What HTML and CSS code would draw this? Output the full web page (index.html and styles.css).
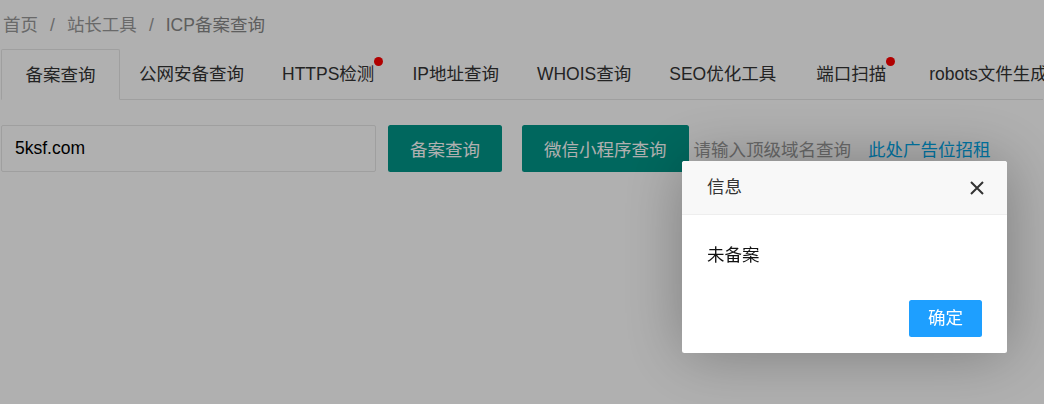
FILE: index.html
```html
<!DOCTYPE html>
<html lang="zh-CN">
  <head>
    <meta charset="UTF-8" />
    <meta name="viewport" content="width=device-width, initial-scale=1.0" />
    <title>ICP备案查询</title>
    <link rel="stylesheet" href="styles.css">
  </head>
  <body>
    <div class="page">
      <div class="breadcrumb">
        <a href="#">首页</a><span class="sep">/</span><a href="#">站长工具</a><span class="sep">/</span><cite>ICP备案查询</cite>
      </div>

      <ul class="tab-title">
        <li class="tab-this">备案查询</li>
        <li>公网安备查询</li>
        <li><span class="tab-text">HTTPS检测<i class="badge-dot"></i></span></li>
        <li>IP地址查询</li>
        <li>WHOIS查询</li>
        <li>SEO优化工具</li>
        <li class="tab-wide"><span class="tab-text">端口扫描<i class="badge-dot"></i></span></li>
        <li>robots文件生成</li>
      </ul>

      <form class="search-row" action="#" onsubmit="return false">
        <input class="search-input" type="text" name="domain" value="5ksf.com" />
        <button class="btn btn-first">备案查询</button>
        <button class="btn btn-second">微信小程序查询</button>
        <span class="search-tip">请输入顶级域名查询</span>
        <a class="ad-link" href="#">此处广告位招租</a>
      </form>
    </div>

    <!-- layer -->
    <div class="layer-shade"></div>
    <div class="layer">
      <div class="layer-title">
        信息
        <a class="layer-close" href="#">
          <svg width="16" height="16" viewBox="0 0 16 16">
            <path d="M2 2 L14 14 M14 2 L2 14" stroke="#333" stroke-width="2" fill="none" />
          </svg>
        </a>
      </div>
      <div class="layer-content">未备案</div>
      <div class="layer-btn">
        <a href="#">确定</a>
      </div>
    </div>
  </body>
</html>
```

FILE: styles.css
```css
body {
  margin: 0;
  background-color: #fff;
  font-family: 'Liberation Sans', 'Noto Sans CJK SC', sans-serif;
  color: #333;
  overflow: hidden;
}

a {
  text-decoration: none;
}

.page {
  padding: 0 1px;
}

.breadcrumb {
  padding-top: 14px;
  padding-left: 2px;
  height: 22px;
  line-height: 22px;
  font-size: 17.5px;
}

.breadcrumb a,
.breadcrumb .sep {
  color: #999;
}

.breadcrumb .sep {
  margin: 0 12px;
}

.breadcrumb cite {
  font-style: normal;
  color: #888;
}

.tab-title {
  display: flex;
  margin: 13px 0 0;
  padding: 0;
  list-style: none;
  height: 50px;
  border-bottom: 1px solid #e6e6e6;
  white-space: nowrap;
}

.tab-title li {
  flex-shrink: 0;
  height: 50px;
  line-height: 50px;
  padding: 0 19px;
  font-size: 17.5px;
  color: #333;
}

.tab-title .tab-this {
  box-sizing: border-box;
  width: 119px;
  height: 51px;
  padding: 0;
  text-align: center;
  border: 1px solid #e6e6e6;
  border-bottom-color: #fff;
  border-radius: 2px 2px 0 0;
  background: #fff;
}

.tab-title .tab-wide {
  padding-left: 21px;
  padding-right: 24px;
}

.tab-text {
  position: relative;
}

.badge-dot {
  position: absolute;
  top: -7px;
  right: -9px;
  width: 9px;
  height: 9px;
  border-radius: 50%;
  background-color: #f00;
}

.search-row {
  display: flex;
  align-items: center;
  margin-top: 25px;
  height: 47px;
}

.search-input {
  box-sizing: border-box;
  width: 375px;
  height: 47px;
  padding: 0 13px;
  border: 1px solid #e6e6e6;
  border-radius: 2px;
  font-family: inherit;
  font-size: 17.5px;
  color: #000;
  outline: none;
}

.btn {
  height: 47px;
  padding: 0 22px;
  border: 0;
  border-radius: 2.5px;
  background-color: #009688;
  color: #fff;
  font-family: inherit;
  font-size: 17.5px;
  white-space: nowrap;
}

.btn-first {
  margin-left: 12px;
}

.btn-second {
  margin-left: 20px;
}

.search-tip {
  margin-left: 5px;
  font-size: 17.5px;
  color: #999;
}

.ad-link {
  margin-left: 17px;
  font-size: 17.5px;
  color: #01aaed;
}

.layer-shade {
  position: fixed;
  top: 0;
  left: 0;
  width: 100%;
  height: 100%;
  background-color: rgba(0, 0, 0, 0.31);
}

.layer {
  position: fixed;
  top: 161px;
  left: 682px;
  width: 325px;
  background-color: #fff;
  border-radius: 2.5px;
  box-shadow: 1px 1px 62px rgba(0, 0, 0, 0.3);
}

.layer-title {
  position: relative;
  height: 53px;
  line-height: 53px;
  padding: 0 80px 0 25px;
  background-color: #f8f8f8;
  border-bottom: 1px solid #eee;
  border-radius: 2.5px 2.5px 0 0;
  font-size: 17.5px;
  color: #333;
}

.layer-close {
  position: absolute;
  top: 19px;
  right: 22px;
  width: 16px;
  height: 16px;
  line-height: 0;
}

.layer-content {
  padding: 27px 25px 23px;
  line-height: 26px;
  font-size: 17.5px;
  color: #111;
}

.layer-btn {
  display: flex;
  justify-content: flex-end;
  padding: 9px 25px 16px;
}

.layer-btn a {
  height: 37px;
  line-height: 37px;
  padding: 0 19px;
  border-radius: 2.5px;
  background-color: #1e9fff;
  color: #fff;
  font-size: 17.5px;
}
```
